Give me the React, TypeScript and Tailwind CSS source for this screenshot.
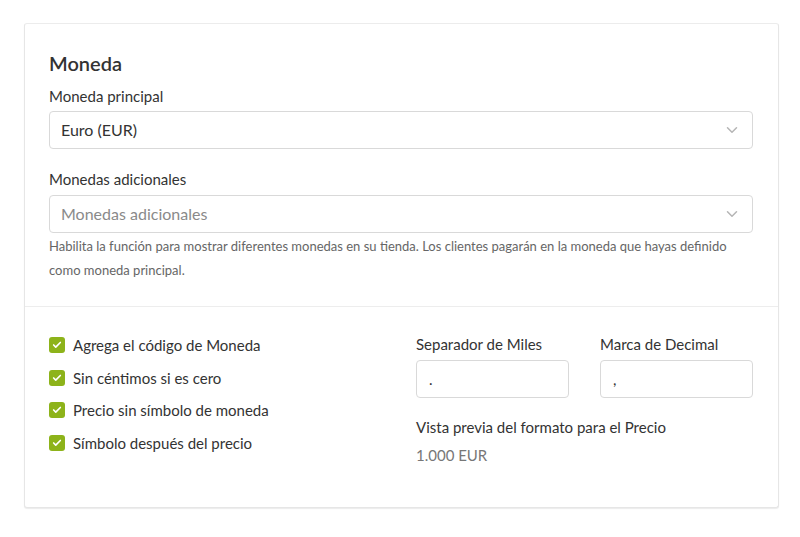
import { Check, ChevronDown } from 'lucide-react'

const options = [
  'Agrega el código de Moneda',
  'Sin céntimos si es cero',
  'Precio sin símbolo de moneda',
  'Símbolo después del precio',
]

function SelectBox({ value, placeholder }: { value?: string; placeholder?: string }) {
  return (
    <div className="flex h-[38px] items-center justify-between rounded-[4px] border border-[#d9d9d9] bg-white pl-[11px] pr-[11px]">
      <span className={value ? 'text-[16px] text-[#333]' : 'text-[16px] text-[#8a8a8a]'}>
        {value ?? placeholder}
      </span>
      <ChevronDown className="h-[18px] w-[18px] text-[#b5b5b5]" strokeWidth={2} />
    </div>
  )
}

export default function App() {
  return (
    <div className="min-h-[537px] bg-white pt-[23px] pl-[24px] font-['Lato',sans-serif] text-[#333]">
      <div className="w-[755px] rounded-[3px] border border-[#e6e6e6] border-t-[#ececec] bg-white shadow-[0_1px_1px_rgba(0,0,0,0.08)]">
        <div className="pt-[26px] pr-[25px] pb-[24px] pl-[24px]">
          <h2 className="text-[20px] leading-[26px] font-semibold text-[#333]">Moneda</h2>
          <label className="mt-[10px] block text-[15px] leading-[20px]">Moneda principal</label>
          <div className="mt-[5px]">
            <SelectBox value="Euro (EUR)" />
          </div>
          <label className="mt-[20px] block text-[15px] leading-[20px]">Monedas adicionales</label>
          <div className="mt-[6px]">
            <SelectBox placeholder="Monedas adicionales" />
          </div>
          <p className="mt-[1px] text-[13px] leading-[24px] text-[#666]">
            Habilita la función para mostrar diferentes monedas en su tienda. Los clientes pagarán en la moneda que
            hayas definido como moneda principal.
          </p>
        </div>
        <div className="grid grid-cols-2 gap-[30px] border-t border-[#ededed] pt-[27px] pr-[25px] pb-[42px] pl-[24px]">
          <div className="flex flex-col gap-[16.5px] pt-[3px]">
            {options.map((label) => (
              <div key={label} className="flex items-center gap-[8px]">
                <span className="flex h-[16px] w-[16px] items-center justify-center rounded-[3px] bg-[#8db31a]">
                  <Check className="h-[10px] w-[10px] text-white" strokeWidth={4} />
                </span>
                <span className="text-[15px] leading-[16px]">{label}</span>
              </div>
            ))}
          </div>
          <div>
            <div className="grid grid-cols-2 gap-[31px]">
              <div>
                <label className="block text-[15px] leading-[20px]">Separador de Miles</label>
                <div className="mt-[6px] flex h-[38px] items-center rounded-[4px] border border-[#d9d9d9] px-[12px] text-[15px]">
                  .
                </div>
              </div>
              <div>
                <label className="block text-[15px] leading-[20px]">Marca de Decimal</label>
                <div className="mt-[6px] flex h-[38px] items-center rounded-[4px] border border-[#d9d9d9] px-[12px] text-[15px]">
                  ,
                </div>
              </div>
            </div>
            <p className="mt-[19px] text-[15px] leading-[20px]">Vista previa del formato para el Precio</p>
            <p className="mt-[8px] text-[15px] leading-[20px] text-[#777]">1.000 EUR</p>
          </div>
        </div>
      </div>
    </div>
  )
}
